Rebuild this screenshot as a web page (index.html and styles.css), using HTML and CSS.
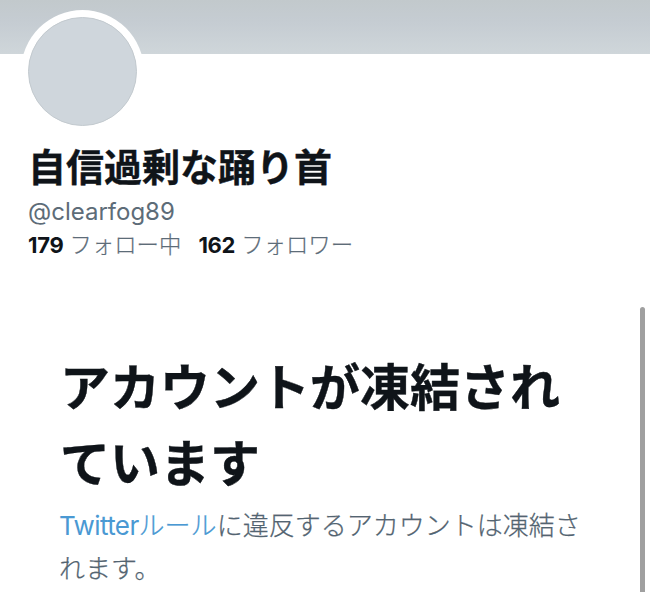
FILE: index.html
```
<!DOCTYPE html>
<html lang="ja">
<head>
<meta charset="utf-8">
<title>自信過剰な踊り首</title>
<link rel="stylesheet" href="styles.css">
</head>
<body>
<div class="banner"></div>
<main class="profile">
  <div class="avatar"></div>
  <h1 class="name">自信過剰な踊り首</h1>
  <div class="handle">@clearfog89</div>
  <div class="stats">
    <span class="stat"><b>179</b><span class="label">フォロー中</span></span>
    <span class="stat"><b>162</b><span class="label">フォロワー</span></span>
  </div>
  <section class="notice">
    <h2 class="headline">アカウントが凍結され<br>ています</h2>
    <p class="detail"><a class="link"><span class="latin">Twitter</span>ルール</a>に違反するアカウントは凍結さ<br>れます。</p>
  </section>
</main>
<div class="scrollbar"></div>
</body>
</html>
```

FILE: styles.css
```
* { box-sizing: border-box; }
body {
  margin: 0;
  height: 592px;
  overflow: hidden;
  position: relative;
  background: #fff;
  color: #0f1419;
  font-family: Inter, "Noto Sans CJK JP", sans-serif;
}
.banner {
  height: 54px;
  background: linear-gradient(#c2c9cc, #c5ccd2 40%, #cfd6da);
}
.profile { padding: 0 28px; }
.avatar {
  position: relative;
  width: 109px;
  height: 109px;
  margin-top: -37px;
  border: 1px solid #c3cacf;
  border-radius: 50%;
  background: #cfd6dc;
  box-shadow: 0 0 0 7px #fff;
}
.name {
  margin: 18px 0 0;
  font-size: 38px;
  line-height: 46px;
  font-weight: 700;
  -webkit-text-stroke: 0.4px;
  white-space: nowrap;
}
.handle {
  margin-top: 6px;
  font-size: 24px;
  line-height: 32px;
  color: #5d6c78;
}
.stats {
  display: flex;
  gap: 17px;
  font-size: 22px;
  line-height: 34px;
}
.stat { display: flex; align-items: baseline; gap: 6px; white-space: nowrap; }
.stat b { letter-spacing: -0.3px; }
.label {
  color: #5d6c78;
  font-size: 22.4px;
  font-weight: 300;
  -webkit-text-stroke: 0.2px;
}
.notice { margin: 88px 0 0 32px; white-space: nowrap; }
.headline {
  margin: 0;
  font-size: 50px;
  line-height: 76px;
  font-weight: 700;
  -webkit-text-stroke: 0.4px;
}
.detail {
  margin: 2px 0 0 -1px;
  font-size: 26px;
  line-height: 43px;
  font-weight: 300;
  -webkit-text-stroke: 0.25px;
  color: #536471;
}
.link { color: #4a99d3; }
.latin { font-weight: 400; letter-spacing: -0.6px; -webkit-text-stroke: 0; }
.scrollbar {
  position: absolute;
  top: 307px;
  right: 5px;
  width: 5px;
  height: 300px;
  border-radius: 3px;
  background: #a0a0a0;
}
```
